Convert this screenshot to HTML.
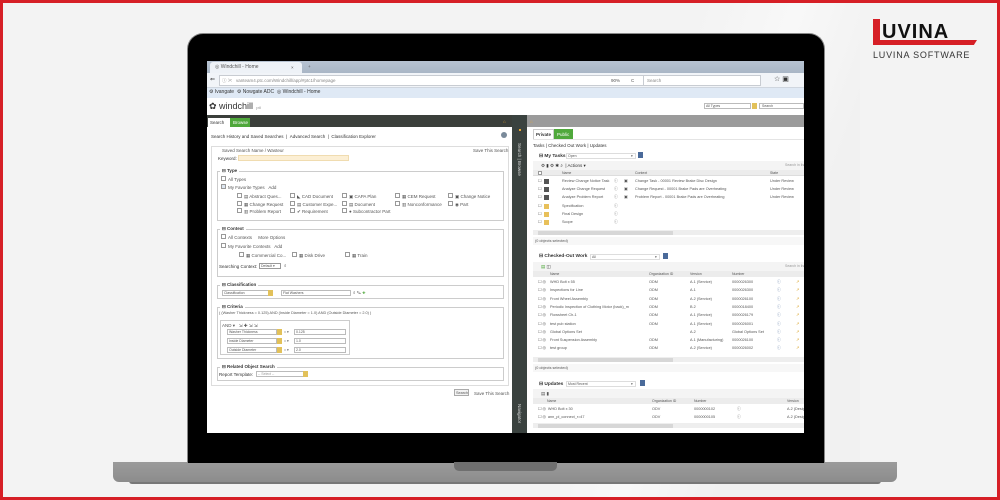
<!DOCTYPE html><html><head><style>
*{margin:0;padding:0;box-sizing:border-box}
body{width:1000px;height:500px;overflow:hidden;background:#f3f3f3;font-family:"Liberation Sans",sans-serif;position:relative;color:#555}
.a{position:absolute}
.t{position:absolute;font-size:4.5px;white-space:nowrap;color:#555;line-height:5px}
.b{font-weight:bold;color:#333}
.cb{position:absolute;width:5px;height:5px;border:1px solid #999;background:#fff}
.fs{position:absolute;border:1px solid #ccc}
.hl{position:absolute;height:1px;background:#e4e4e4}
</style></head><body>
<div class="a" style="left:560px;top:0;width:300px;height:500px;background:linear-gradient(110deg,#f3f3f3 30%,#f8f8f8 50%,#f1f1f1 70%)"></div>
<div class="a" style="left:0;top:0;width:1000px;height:500px;border:3px solid #d61f26;z-index:5"></div>
<!-- logo -->
<div class="a" style="left:873px;top:19px;width:7px;height:26px;background:#d61f26"></div>
<div class="a" style="left:873px;top:40px;width:104px;height:5px;background:#d61f26;clip-path:polygon(0 0,100% 0,97% 100%,0 100%)"></div>
<div class="t" style="left:882px;top:22px;font-size:20px;line-height:20px;color:#111;font-weight:bold;letter-spacing:1px">UVINA</div>
<div class="t" style="left:873px;top:50px;font-size:9px;line-height:10px;color:#333;letter-spacing:0.8px">LUVINA SOFTWARE</div>
<!-- laptop -->
<div class="a" style="left:129px;top:478px;width:752px;height:6px;background:#777;border-radius:0 0 3px 3px"></div>
<div class="a" style="left:113px;top:462px;width:784px;height:20px;background:linear-gradient(#9b9b9b,#8c8c8c);border-radius:0 0 6px 6px"></div>
<div class="a" style="left:187px;top:33px;width:638px;height:430px;background:#000;border-radius:16px 16px 0 0;border:1px solid #888;border-bottom:none"></div>
<div class="a" style="left:454px;top:462px;width:103px;height:9px;background:#6f6f6f;border-radius:0 0 5px 5px"></div>
<!-- screen -->
<div id="scr" class="a" style="left:207px;top:61px;width:597px;height:372px;background:#fff;overflow:hidden">
 <div class="a" style="left:0;top:0;width:597px;height:12px;background:linear-gradient(#b7c3d2,#a9b6c6)"></div>
 <div class="a" style="left:3px;top:1px;width:92px;height:11px;background:#eef2f7;border-radius:3px 3px 0 0"></div>
 <div class="t" style="left:8px;top:4px;font-size:5px">◎ Windchill - Home</div>
 <div class="t" style="left:84px;top:4px">×</div><div class="t" style="left:101px;top:3px">+</div>
 <div class="a" style="left:0;top:12px;width:597px;height:15px;background:#f1f4f8;border-bottom:1px solid #cfd6df"></div>
 <div class="t" style="left:3px;top:17px;font-size:6px;color:#333">⇐</div>
 <div class="a" style="left:12px;top:14px;width:440px;height:11px;background:#fff;border:1px solid #c8ccd2"></div>
 <div class="t" style="left:15px;top:17px;color:#888">ⓘ ✂ &nbsp;&nbsp;vanteam4.ptc.com/Windchill/app/#ptc1/homepage</div>
 <div class="t" style="left:404px;top:17px">90%</div><div class="t" style="left:424px;top:17px">C</div>
 <div class="a" style="left:436px;top:14px;width:118px;height:11px;background:#fff;border:1px solid #c8ccd2"></div>
 <div class="t" style="left:440px;top:17px;color:#888">Search</div>
 <div class="t" style="left:567px;top:16px;font-size:7px;color:#333">☆ ▣</div>
 <div class="a" style="left:0;top:27px;width:597px;height:10px;background:#dfe9f5"></div>
 <div class="t" style="left:2px;top:29px;color:#333;font-size:5px">⚙ Ivangate &nbsp;⚙ Nowgate ADC &nbsp;◎ Windchill - Home</div>
 <div class="t" style="left:2px;top:40px;font-size:9px;line-height:10px;color:#333">✿ windchill<span style="font-size:4px;color:#888"> &nbsp;&nbsp;ptl</span></div>
 <div class="a" style="left:497px;top:42px;width:47px;height:6px;border:1px solid #bbb"></div>
 <div class="t" style="left:499px;top:43px;font-size:3.5px">All Types</div>
 <div class="a" style="left:545px;top:42px;width:5px;height:6px;background:#e2c15a"></div>
 <div class="a" style="left:552px;top:42px;width:45px;height:6px;border:1px solid #bbb"></div>
 <div class="t" style="left:555px;top:43px;font-size:3.5px">Search</div>
 <!-- left header -->
 <div class="a" style="left:0;top:54px;width:305px;height:12px;background:#3b3f3b"></div>
 <div class="a" style="left:1px;top:57px;width:22px;height:9px;background:#fff"></div>
 <div class="t" style="left:3px;top:59px;color:#333">Search</div>
 <div class="a" style="left:23px;top:57px;width:20px;height:9px;background:#4fa83b"></div>
 <div class="t" style="left:26px;top:59px;color:#fff">Browse</div>
 <div class="t" style="left:296px;top:58px;color:#e7a630">⌂</div>
 <div class="a" style="left:305px;top:54px;width:15px;height:318px;background:#3a423f"></div>
 <div class="t" style="top:82px;color:#ddd;transform:rotate(90deg);transform-origin:left top;left:315px">Search | Browse</div>
 <div class="t" style="left:315px;top:343px;color:#ddd;transform:rotate(90deg);transform-origin:left top">Navigator</div>
 <div class="a" style="left:312px;top:68px;width:2px;height:2px;background:#e7a630"></div>
 <div class="a" style="left:320px;top:54px;width:277px;height:12px;background:#9b9b9b"></div>
 <div class="t" style="left:323px;top:58px;color:#e7a630">⌂</div>
 <!-- left content -->
 <div class="t" style="left:4px;top:73px;color:#333">Search History and Saved Searches &nbsp;| &nbsp;Advanced Search &nbsp;| &nbsp;Classification Explorer</div>
 <div class="a" style="left:294px;top:71px;width:6px;height:6px;border-radius:50%;background:#7a8a9a"></div>
 <div class="fs" style="left:4px;top:85px;width:298px;height:240px;border-color:#ddd"></div>
 <div class="t" style="left:15px;top:87px">Saved Search Name / Wasteur</div>
 <div class="t" style="left:266px;top:87px">Save This Search</div>
 <div class="t" style="left:11px;top:95px;color:#333">Keyword:</div>
 <div class="a" style="left:31px;top:94px;width:111px;height:6px;background:#fcefd4;border:1px solid #f0dcb0"></div>
 <div class="fs" style="left:10px;top:110px;width:287px;height:50px"></div>
 <div class="t b" style="left:13px;top:107px;background:#fff;padding:0 2px">⊟ Type</div>
 <div class="cb" style="left:14px;top:115px"></div><div class="t" style="left:21px;top:116px">All Types</div>
 <div class="cb" style="left:14px;top:123px;background:#dde6f0"></div><div class="t" style="left:21px;top:124px">My Favorite Types &nbsp;&nbsp;Add</div>
 <div class="cb" style="left:30px;top:132px"></div><div class="t" style="left:37px;top:133px">▤ Abstract Ques...</div>
 <div class="cb" style="left:30px;top:140px"></div><div class="t" style="left:37px;top:141px">▦ Change Request</div>
 <div class="cb" style="left:30px;top:147px"></div><div class="t" style="left:37px;top:148px">▥ Problem Report</div>
 <div class="cb" style="left:83px;top:132px"></div><div class="t" style="left:90px;top:133px">◣ CAD Document</div>
 <div class="cb" style="left:83px;top:140px"></div><div class="t" style="left:90px;top:141px">▤ Customer Expe...</div>
 <div class="cb" style="left:83px;top:147px"></div><div class="t" style="left:90px;top:148px">✔ Requirement</div>
 <div class="cb" style="left:135px;top:132px"></div><div class="t" style="left:142px;top:133px">▣ CAPA Plan</div>
 <div class="cb" style="left:135px;top:140px"></div><div class="t" style="left:142px;top:141px">▤ Document</div>
 <div class="cb" style="left:135px;top:147px"></div><div class="t" style="left:142px;top:148px">● Subcontractor Part</div>
 <div class="cb" style="left:188px;top:132px"></div><div class="t" style="left:195px;top:133px">▦ CEM Request</div>
 <div class="cb" style="left:188px;top:140px"></div><div class="t" style="left:195px;top:141px">▥ Nonconformance</div>
 <div class="cb" style="left:241px;top:132px"></div><div class="t" style="left:248px;top:133px">▣ Change Notice</div>
 <div class="cb" style="left:241px;top:140px"></div><div class="t" style="left:248px;top:141px">◉ Part</div>
 <div class="fs" style="left:10px;top:168px;width:287px;height:48px"></div>
 <div class="t b" style="left:13px;top:165px;background:#fff;padding:0 2px">⊟ Context</div>
 <div class="cb" style="left:14px;top:173px"></div><div class="t" style="left:21px;top:174px">All Contexts &nbsp;&nbsp;&nbsp;&nbsp;More Options</div>
 <div class="cb" style="left:14px;top:182px"></div><div class="t" style="left:21px;top:183px">My Favorite Contexts &nbsp;&nbsp;Add</div>
 <div class="cb" style="left:32px;top:191px"></div><div class="t" style="left:39px;top:192px">▦ Commercial Co...</div>
 <div class="cb" style="left:85px;top:191px"></div><div class="t" style="left:92px;top:192px">▦ Disk Drive</div>
 <div class="cb" style="left:138px;top:191px"></div><div class="t" style="left:145px;top:192px">▦ Train</div>
 <div class="t" style="left:12px;top:203px;color:#333">Searching Context:</div>
 <div class="a" style="left:52px;top:202px;width:22px;height:6px;border:1px solid #999"></div>
 <div class="t" style="left:54px;top:203px;font-size:3.5px">Default ▾</div>
 <div class="t" style="left:77px;top:202px">⌕</div>
 <div class="fs" style="left:10px;top:224px;width:287px;height:14px"></div>
 <div class="t b" style="left:13px;top:221px;background:#fff;padding:0 2px">⊟ Classification</div>
 <div class="a" style="left:15px;top:229px;width:50px;height:6px;border:1px solid #bbb"></div>
 <div class="t" style="left:17px;top:230px;font-size:3.5px">Classification</div>
 <div class="a" style="left:61px;top:229px;width:5px;height:6px;background:#e2c15a"></div>
 <div class="a" style="left:74px;top:229px;width:70px;height:6px;border:1px solid #bbb"></div>
 <div class="t" style="left:76px;top:230px;font-size:3.5px">Flat Washers</div>
 <div class="t" style="left:146px;top:229px">⌕ ✎ <span style="color:#4fa83b">✚</span></div>
 <div class="fs" style="left:10px;top:246px;width:287px;height:52px"></div>
 <div class="t b" style="left:13px;top:243px;background:#fff;padding:0 2px">⊟ Criteria</div>
 <div class="t" style="left:12px;top:250px;font-size:3.8px">( (Washer Thickness = 0.125) AND (Inside Diameter = 1.0) AND (Outside Diameter = 2.0) )</div>
 <div class="fs" style="left:13px;top:259px;width:130px;height:35px"></div>
 <div class="t" style="left:15px;top:262px">AND ▾ &nbsp;&nbsp;⇲ ✚ ⇲ ⇲</div>
 <div class="a" style="left:20px;top:268px;width:50px;height:6px;border:1px solid #bbb"></div><div class="t" style="left:22px;top:269px;font-size:3.5px">Washer Thickness</div>
 <div class="a" style="left:70px;top:268px;width:5px;height:6px;background:#e2c15a"></div><div class="t" style="left:77px;top:269px;font-size:3.5px">= ▾</div>
 <div class="a" style="left:87px;top:268px;width:52px;height:6px;border:1px solid #bbb"></div><div class="t" style="left:89px;top:269px;font-size:3.5px">0.125</div>
 <div class="a" style="left:20px;top:277px;width:50px;height:6px;border:1px solid #bbb"></div><div class="t" style="left:22px;top:278px;font-size:3.5px">Inside Diameter</div>
 <div class="a" style="left:70px;top:277px;width:5px;height:6px;background:#e2c15a"></div><div class="t" style="left:77px;top:278px;font-size:3.5px">= ▾</div>
 <div class="a" style="left:87px;top:277px;width:52px;height:6px;border:1px solid #bbb"></div><div class="t" style="left:89px;top:278px;font-size:3.5px">1.0</div>
 <div class="a" style="left:20px;top:286px;width:50px;height:6px;border:1px solid #bbb"></div><div class="t" style="left:22px;top:287px;font-size:3.5px">Outside Diameter</div>
 <div class="a" style="left:70px;top:286px;width:5px;height:6px;background:#e2c15a"></div><div class="t" style="left:77px;top:287px;font-size:3.5px">= ▾</div>
 <div class="a" style="left:87px;top:286px;width:52px;height:6px;border:1px solid #bbb"></div><div class="t" style="left:89px;top:287px;font-size:3.5px">2.0</div>
 <div class="fs" style="left:10px;top:306px;width:287px;height:14px"></div>
 <div class="t b" style="left:13px;top:303px;background:#fff;padding:0 2px">⊟ Related Object Search</div>
 <div class="t" style="left:12px;top:311px;color:#333">Report Template:</div>
 <div class="a" style="left:49px;top:310px;width:50px;height:6px;border:1px solid #bbb"></div><div class="t" style="left:51px;top:311px;font-size:3.5px;color:#999">-- Select --</div>
 <div class="a" style="left:96px;top:310px;width:5px;height:6px;background:#e2c15a"></div>
 <div class="a" style="left:247px;top:328px;width:15px;height:7px;border:1px solid #aaa;background:#f3f3f3"></div>
 <div class="t" style="left:249px;top:330px;font-size:3.8px">Search</div>
 <div class="t" style="left:267px;top:330px">Save This Search</div>
 <!-- right content -->
 <div class="a" style="left:326px;top:68px;width:21px;height:10px;border:1px solid #ccc;border-bottom:none"></div>
 <div class="t b" style="left:329px;top:71px">Private</div>
 <div class="a" style="left:347px;top:68px;width:19px;height:10px;background:#4fa83b"></div>
 <div class="t" style="left:350px;top:71px;color:#fff">Public</div>
 <div class="hl" style="left:326px;top:78px;width:271px"></div>
 <div class="t" style="left:326px;top:82px;color:#333">Tasks | Checked Out Work | Updates</div>
 <!-- My Tasks -->
 <div class="t b" style="left:332px;top:93px;font-size:4.8px">⊟ My Tasks</div>
 <div class="a" style="left:359px;top:92px;width:70px;height:6px;border:1px solid #ddd"></div><div class="t" style="left:361px;top:93px;font-size:3.5px">Open</div><div class="t" style="left:424px;top:93px;font-size:3.5px">▾</div>
 <div class="a" style="left:431px;top:91px;width:5px;height:6px;background:#4a6a9a"></div>
 <div class="a" style="left:326px;top:100px;width:271px;height:9px;background:#f4f4f4"></div>
 <div class="t" style="left:334px;top:102px;color:#333">⚙ ▮ ⚙ ✱ ⌕ &nbsp;| Actions ▾</div>
 <div class="t" style="left:578px;top:102px;font-size:3.5px;color:#999">Search in list</div>
 <div class="a" style="left:326px;top:109px;width:271px;height:6px;background:#ececec;border-bottom:1px solid #ddd"></div>
 <div class="cb" style="left:331px;top:110px;width:4px;height:4px"></div>
 <div class="t" style="left:355px;top:110px;font-size:3.5px">Name</div><div class="t" style="left:428px;top:110px;font-size:3.5px">Context</div><div class="t" style="left:563px;top:110px;font-size:3.5px">State</div>
 <div class="a" style="left:326px;top:169px;width:271px;height:5px;background:#eee"></div>
 <div class="a" style="left:331px;top:170px;width:135px;height:4px;background:#d7d7d7"></div>
 <div class="a" style="left:326px;top:176px;width:271px;height:8px;background:#f7f7f7"></div>
 <div class="t" style="left:328px;top:178px;font-size:3.8px">(0 objects selected)</div>
 <!-- Checked out -->
 <div class="t b" style="left:332px;top:193px;font-size:4.8px">⊟ Checked-Out Work</div>
 <div class="a" style="left:383px;top:193px;width:70px;height:6px;border:1px solid #ddd"></div><div class="t" style="left:385px;top:194px;font-size:3.5px">All</div><div class="t" style="left:448px;top:194px;font-size:3.5px">▾</div>
 <div class="a" style="left:456px;top:192px;width:5px;height:6px;background:#4a6a9a"></div>
 <div class="a" style="left:326px;top:201px;width:271px;height:9px;background:#f4f4f4"></div>
 <div class="t" style="left:334px;top:203px;color:#4fa83b">▤ <span style="color:#333">◫</span></div>
 <div class="t" style="left:578px;top:203px;font-size:3.5px;color:#999">Search in list</div>
 <div class="a" style="left:326px;top:210px;width:271px;height:6px;background:#ececec"></div>
 <div class="t" style="left:343px;top:211px;font-size:3.5px">Name</div><div class="t" style="left:442px;top:211px;font-size:3.5px">Organization ID</div><div class="t" style="left:483px;top:211px;font-size:3.5px">Version</div><div class="t" style="left:525px;top:211px;font-size:3.5px">Number</div>
 <div class="a" style="left:326px;top:296px;width:271px;height:5px;background:#eee"></div>
 <div class="a" style="left:331px;top:297px;width:135px;height:4px;background:#d7d7d7"></div>
 <div class="a" style="left:326px;top:303px;width:271px;height:8px;background:#f7f7f7"></div>
 <div class="t" style="left:328px;top:305px;font-size:3.8px">(0 objects selected)</div>
 <!-- Updates -->
 <div class="t b" style="left:332px;top:321px;font-size:4.8px">⊟ Updates</div>
 <div class="a" style="left:359px;top:320px;width:70px;height:6px;border:1px solid #ddd"></div><div class="t" style="left:361px;top:321px;font-size:3.5px">Most Recent</div><div class="t" style="left:424px;top:321px;font-size:3.5px">▾</div>
 <div class="a" style="left:433px;top:319px;width:5px;height:6px;background:#4a6a9a"></div>
 <div class="a" style="left:326px;top:328px;width:271px;height:9px;background:#f4f4f4"></div>
 <div class="t" style="left:334px;top:330px">▤ ▮</div>
 <div class="a" style="left:326px;top:337px;width:271px;height:6px;background:#ececec"></div>
 <div class="t" style="left:340px;top:338px;font-size:3.5px">Name</div><div class="t" style="left:445px;top:338px;font-size:3.5px">Organization ID</div><div class="t" style="left:487px;top:338px;font-size:3.5px">Number</div><div class="t" style="left:580px;top:338px;font-size:3.5px">Version</div>
 <div class="t" style="left:331px;top:346px;font-size:3.8px">☐ ◎ &nbsp;WHD Bolt x 30</div><div class="t" style="left:445px;top:346px;font-size:3.8px">ODV</div><div class="t" style="left:487px;top:346px;font-size:3.8px">0000000102</div><div class="t" style="left:530px;top:346px;font-size:3.8px">ⓘ</div><div class="t" style="left:580px;top:346px;font-size:3.8px">A.2 (Design)</div>
 <div class="t" style="left:331px;top:354px;font-size:3.8px">☐ ◎ &nbsp;ann_pl_connect_r=47</div><div class="t" style="left:445px;top:354px;font-size:3.8px">ODV</div><div class="t" style="left:487px;top:354px;font-size:3.8px">0000000105</div><div class="t" style="left:530px;top:354px;font-size:3.8px">ⓘ</div><div class="t" style="left:580px;top:354px;font-size:3.8px">A.2 (Design)</div>
 <div class="a" style="left:326px;top:362px;width:271px;height:5px;background:#eee"></div>
 <div class="a" style="left:331px;top:363px;width:135px;height:4px;background:#d7d7d7"></div>
</div>
<script>
var s=document.getElementById('scr');
function T(x,y,t,c){var d=document.createElement('div');d.className='t';d.style.cssText='left:'+x+'px;top:'+y+'px;font-size:3.8px'+(c?';color:'+c:'');d.textContent=t;s.appendChild(d);}
var mt=[["Review Change Notice Task","Change Task - 00001 Review Brake Disc Design","Under Review",1],["Analyze Change Request","Change Request - 00001 Brake Pads are Overheating","Under Review",1],["Analyze Problem Report","Problem Report - 00001 Brake Pads are Overheating","Under Review",1],["Specification","","",0],["Final Design","","",0],["Scope","","",0]];
mt.forEach(function(r,i){var y=118+i*8.2;T(331,y,"☐");var b=document.createElement('div');b.className='a';b.style.cssText='left:337px;top:'+y+'px;width:5px;height:5px;background:'+(r[3]?'#555':'#e8c05a');s.appendChild(b);T(355,y,r[0]);T(407,y,"ⓘ");if(r[1]){T(417,y,"▣");T(428,y,r[1]);T(563,y,r[2]);}});
var co=[["WHD Bolt x 55","ODM","A.1 (Service)","0000026300"],["Inspections for Line","ODM","A.1","0000026300"],["Front Wheel Assembly","ODM","A.2 (Service)","0000026100"],["Periodic Inspection of Clothing Motor (back)_m","ODM","B.2","0000018400"],["Flowsheet Ch-1","ODM","A.1 (Service)","0000026179"],["test pub station","ODM","A.1 (Service)","0000026001"],["Global Options Set","","A.2","Global Options Set"],["Front Suspension Assembly","ODM","A.1 (Manufacturing)","0000026100"],["test group","ODM","A.2 (Service)","0000026002"]];
co.forEach(function(r,i){var y=219+i*8.3;T(331,y,"☐ ◎");T(343,y,r[0]);T(442,y,r[1]);T(483,y,r[2]);T(525,y,r[3]);T(570,y,"ⓘ","#4a6a9a");T(589,y,"↗","#d9a020");});
</script>
</body></html>
